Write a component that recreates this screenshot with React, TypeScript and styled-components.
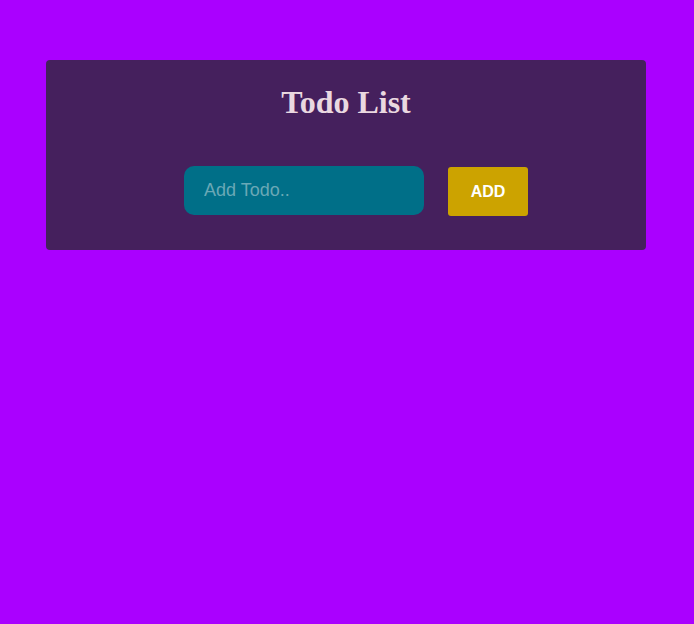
import styled, { createGlobalStyle } from 'styled-components';

const GlobalStyle = createGlobalStyle`
  html, body {
    margin: 0;
    padding: 0;
    background: #aa00ff;
    min-height: 100%;
  }

  body {
    font-family: 'Liberation Sans', Arial, sans-serif;
  }
`;

const Page = styled.div`
  min-height: 624px;
  padding-top: 60px;
  box-sizing: border-box;
`;

const Card = styled.div`
  width: 600px;
  height: 190px;
  margin-left: 46px;
  box-sizing: border-box;
  padding-top: 20px;
  background: #45205d;
  border-radius: 4px;
`;

const Title = styled.h1`
  margin: 0;
  text-align: center;
  font-family: 'Liberation Serif', 'Times New Roman', serif;
  font-size: 32px;
  font-weight: bold;
  line-height: 44px;
  color: #ead8e0;
`;

const Form = styled.form`
  display: flex;
  align-items: center;
  justify-content: center;
  gap: 24px;
  margin-top: 41px;
  padding-left: 20px;
`;

const TodoInput = styled.input`
  width: 240px;
  height: 49px;
  box-sizing: border-box;
  padding: 0 20px;
  border: none;
  outline: none;
  border-radius: 10px;
  background: #006f88;
  color: #ffffff;
  font-family: 'Liberation Sans', Arial, sans-serif;
  font-size: 18px;

  &::placeholder {
    color: #6aa8b6;
  }
`;

const AddButton = styled.button`
  width: 80px;
  height: 49px;
  margin-top: 2px;
  border: none;
  border-radius: 3px;
  background: #cca300;
  color: #ffffff;
  font-family: 'Liberation Sans', Arial, sans-serif;
  font-size: 16px;
  font-weight: bold;
  cursor: pointer;
`;

const App = () => {
  return (
    <>
      <GlobalStyle />
      <Page>
        <Card>
          <Title>Todo List</Title>
          <Form onSubmit={(e) => e.preventDefault()}>
            <TodoInput type="text" placeholder="Add Todo.." />
            <AddButton type="submit">ADD</AddButton>
          </Form>
        </Card>
      </Page>
    </>
  );
};

export default App;
